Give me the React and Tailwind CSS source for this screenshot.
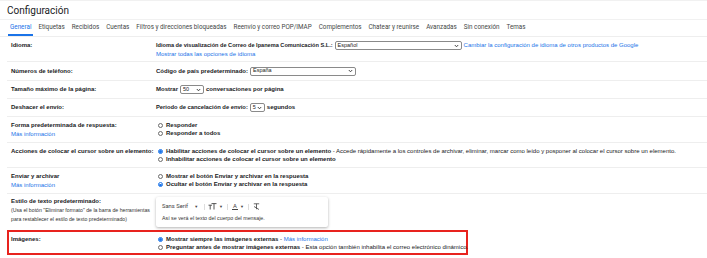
import React from 'react';

const Chevron = () => (
  <svg width="5" height="4" viewBox="0 0 5 4" className="shrink-0">
    <path d="M0.8 1 L2.5 2.8 L4.2 1" fill="none" stroke="#333" strokeWidth="0.9" />
  </svg>
);

const Select = ({ value, className }) => (
  <div className={`h-[9px] border border-[#8a8a8a] rounded-[2px] bg-white flex items-center justify-between pl-[2px] pr-[2px] text-[5.5px] font-normal text-[#222] ${className}`}>
    <span className="leading-none">{value}</span>
    <Chevron />
  </div>
);

const Radio = ({ checked }) =>
  checked ? (
    <span className="w-[5px] h-[5px] shrink-0 rounded-full border border-[#1a73e8] flex items-center justify-center">
      <span className="w-[2.5px] h-[2.5px] rounded-full bg-[#1a73e8]" />
    </span>
  ) : (
    <span className="w-[5px] h-[5px] shrink-0 rounded-full border border-[#6b6b6b]" />
  );

const Option = ({ checked, children }) => (
  <div className="flex items-center gap-[3px] h-[8.5px]">
    <Radio checked={checked} />
    <span className="whitespace-nowrap">{children}</span>
  </div>
);

const Link = ({ children }) => <span className="text-[#1a73e8] font-normal">{children}</span>;

const Row = ({ label, sub, className, children }) => (
  <div className={`flex border-b border-[#eeeeee] pl-[4px] ${className}`}>
    <div className="w-[145px] shrink-0">
      <div className="font-bold">{label}</div>
      {sub}
    </div>
    <div className="flex-1 min-w-0">{children}</div>
  </div>
);

const tabs = [
  'General',
  'Etiquetas',
  'Recibidos',
  'Cuentas',
  'Filtros y direcciones bloqueadas',
  'Reenvío y correo POP/IMAP',
  'Complementos',
  'Chatear y reunirse',
  'Avanzadas',
  'Sin conexión',
  'Temas',
];

export default function App() {
  return (
    <div className="w-[707px] h-[258px] overflow-hidden bg-white text-[#202124] font-['Liberation_Sans',Arial,sans-serif] text-[6px] leading-[9px]">
      {/* Cabecera */}
      <div className="h-[20px] border-t border-[#f1f1f1] border-b pl-[7px] flex items-center font-['Roboto',sans-serif] text-[10px] text-[#202124]">
        Configuración
      </div>
      <div className="h-[17px] flex items-end gap-[3px] pl-[8px] border-b border-[#eeeeee] font-['Roboto',sans-serif] text-[6.3px] text-[#444746]">
        {tabs.map((t, i) => (
          <div
            key={t}
            className={`h-[16px] flex items-center px-[2px] border-b-2 ${i === 0 ? 'border-[#1a73e8] text-[#1a73e8]' : 'border-transparent'}`}
          >
            {t}
          </div>
        ))}
      </div>

      <div className="ml-[7px]">
        {/* Idioma */}
        <Row label="Idioma:" className="h-[25px] pt-[4px]">
          <div className="flex items-center gap-[2px] font-bold">
            <span className="whitespace-nowrap text-[5.6px]">Idioma de visualización de Correo de Ipanema Comunicación S.L.:</span>
            <Select value="Español" className="w-[127px]" />
            <Link>Cambiar la configuración de idioma de otros productos de Google</Link>
          </div>
          <Link>Mostrar todas las opciones de idioma</Link>
        </Row>

        <Row label="Números de teléfono:" className="h-[19px] items-center">
          <div className="flex items-center gap-[2px] font-bold">
            <span>Código de país predeterminado:</span>
            <Select value="España" className="w-[106px]" />
          </div>
        </Row>

        <Row label="Tamaño máximo de la página:" className="h-[18px] items-center">
          <div className="flex items-center gap-[2px] font-bold">
            <span>Mostrar</span>
            <Select value="50" className="w-[24px]" />
            <span>conversaciones por página</span>
          </div>
        </Row>

        <Row label="Deshacer el envío:" className="h-[18px] items-center">
          <div className="flex items-center gap-[2px] font-bold">
            <span className="text-[5.8px]">Periodo de cancelación de envío:</span>
            <Select value="5" className="w-[15px]" />
            <span>segundos</span>
          </div>
        </Row>

        <Row
          label="Forma predeterminada de respuesta:"
          sub={<Link>Más información</Link>}
          className="h-[26px] pt-[4px]"
        >
          <div className="pl-[2px] font-bold">
            <Option>Responder</Option>
            <Option>Responder a todos</Option>
          </div>
        </Row>

        <Row label="Acciones de colocar el cursor sobre un elemento:" className="h-[25px] pt-[4px]">
          <div className="pl-[2px] font-bold">
            <Option checked>
              Habilitar acciones de colocar el cursor sobre un elemento
              <span className="font-normal"> - Accede rápidamente a los controles de archivar, eliminar, marcar como leído y posponer al colocar el cursor sobre un elemento.</span>
            </Option>
            <Option>Inhabilitar acciones de colocar el cursor sobre un elemento</Option>
          </div>
        </Row>

        <Row label="Enviar y archivar" sub={<Link>Más información</Link>} className="h-[26px] pt-[4px]">
          <div className="pl-[2px] font-bold">
            <Option>Mostrar el botón Enviar y archivar en la respuesta</Option>
            <Option checked>Ocultar el botón Enviar y archivar en la respuesta</Option>
          </div>
        </Row>

        <Row
          label="Estilo de texto predeterminado:"
          sub={
            <div className="text-[5.2px] leading-[8.5px] text-[#333]">
              <div className="whitespace-nowrap">(Usa el botón "Eliminar formato" de la barra de herramientas</div>
              <div className="whitespace-nowrap">para restablecer el estilo de texto predeterminado)</div>
            </div>
          }
          className="h-[36px] pt-[3px] border-b-0"
        >
          <div className="w-[172px] h-[30px] rounded-[2px] shadow-[0_1px_3px_rgba(0,0,0,0.3)] pl-[6px] pt-[5px] font-['Roboto',sans-serif]">
            <div className="flex items-center h-[9px] text-[#444]">
              <span className="text-[5.8px]">Sans Serif</span>
              <span className="ml-[6px] text-[4px]">▼</span>
              <span className="ml-[6px] w-px h-[6px] bg-[#ddd]" />
              <svg width="9" height="7" viewBox="0 0 9 7" className="ml-[3px]">
                <path d="M0.5 2.2 H4 M2.2 2.2 V6.5 M3.5 0.6 H8.5 M6 0.6 V6.5" fill="none" stroke="#444" strokeWidth="0.9" />
              </svg>
              <span className="ml-[2px] text-[4px]">▼</span>
              <span className="ml-[4px] w-px h-[6px] bg-[#ddd]" />
              <span className="ml-[4px] flex flex-col items-center leading-none">
                <span className="text-[6px] leading-[6px]">A</span>
                <span className="w-[6px] h-[1px] bg-[#444]" />
              </span>
              <span className="ml-[2px] text-[4px]">▼</span>
              <span className="ml-[4px] w-px h-[6px] bg-[#ddd]" />
              <svg width="7" height="7" viewBox="0 0 7 7" className="ml-[4px]">
                <path d="M0.8 0.8 H6.2 M3.5 0.8 V6.2 M1 3.5 L6 6.5" fill="none" stroke="#444" strokeWidth="0.8" />
              </svg>
            </div>
            <div className="text-[5.3px] leading-[9px] mt-[3px] text-[#333] font-['Liberation_Sans',Arial,sans-serif]">
              Así se verá el texto del cuerpo del mensaje.
            </div>
          </div>
        </Row>

        {/* Imágenes */}
        <div className="w-[461px] h-[25px] border-2 border-[#e8231e] flex pl-[2px] pt-[3px]">
          <div className="w-[145px] shrink-0 font-bold">Imágenes:</div>
          <div className="font-bold pl-[2px]">
            <Option checked>
              Mostrar siempre las imágenes externas<span className="font-normal"> - </span>
              <Link>Más información</Link>
            </Option>
            <Option>
              Preguntar antes de mostrar imágenes externas
              <span className="font-normal"> - Esta opción también inhabilita el correo electrónico dinámico.</span>
            </Option>
          </div>
        </div>
      </div>
    </div>
  );
}
